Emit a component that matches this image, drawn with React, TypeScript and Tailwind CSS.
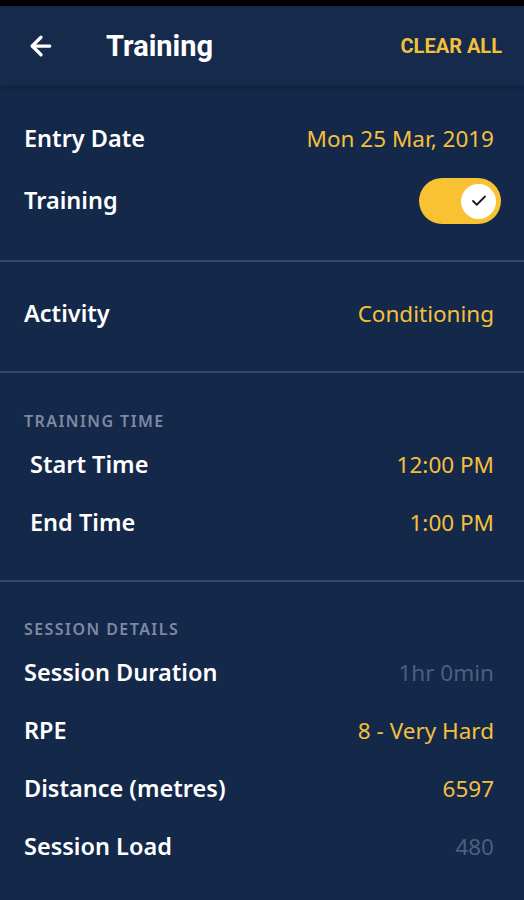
import { ArrowLeft, Check } from 'lucide-react';

type Row = { label: string; value: string; muted?: boolean };

const sans = "font-['Noto_Sans','Open_Sans',sans-serif]";

function Divider() {
  return <div className="h-[2px] bg-[#34496b]" />;
}

function FieldRow({ label, value, muted, indent }: Row & { indent?: boolean }) {
  return (
    <div className={`flex h-[58px] items-center justify-between pr-[30px] ${indent ? 'pl-[30px]' : 'pl-[24px]'}`}>
      <span className="text-[23.5px] font-semibold text-white">{label}</span>
      <span className={`text-[22.5px] ${muted ? 'text-[#4c5f80]' : 'text-[#f4c03c]'}`}>{value}</span>
    </div>
  );
}

function SectionLabel({ children }: { children: string }) {
  return (
    <div className="flex h-[20px] items-center pl-[24px] text-[16px] font-semibold uppercase tracking-[0.09em] text-[#7e8aa0]">
      {children}
    </div>
  );
}

export default function App() {
  const timeRows: Row[] = [
    { label: 'Start Time', value: '12:00 PM' },
    { label: 'End Time', value: '1:00 PM' },
  ];
  const sessionRows: Row[] = [
    { label: 'Session Duration', value: '1hr 0min', muted: true },
    { label: 'RPE', value: '8 - Very Hard' },
    { label: 'Distance (metres)', value: '6597' },
    { label: 'Session Load', value: '480', muted: true },
  ];

  return (
    <div className={`flex min-h-[900px] w-[524px] flex-col bg-[#14284a] ${sans}`}>
      <div className="h-[6px] bg-black" />
      <header className="flex h-[80px] items-center bg-[#162a4b] pl-[26px] pr-[22px] shadow-[0_2px_3px_rgba(0,0,0,0.2)]">
        <ArrowLeft className="h-[30px] w-[30px] text-white" strokeWidth={2.6} />
        <h1 className="ml-[50px] flex-1 pt-[2px] font-['Roboto',sans-serif] text-[29px] font-bold text-white">Training</h1>
        <button className="font-['Roboto',sans-serif] text-[20px] font-bold text-[#f4c03c]">CLEAR ALL</button>
      </header>

      <section className="pb-[30px] pt-[24px]">
        <FieldRow label="Entry Date" value="Mon 25 Mar, 2019" />
        <div className="flex h-[62px] items-center justify-between pl-[24px] pr-[23px] pt-[4px]">
          <span className="text-[23.5px] font-semibold text-white">Training</span>
          <div className="flex h-[46px] w-[82px] items-center justify-end rounded-full bg-[#f8c232] pr-[5px]">
            <div className="flex h-[35px] w-[35px] items-center justify-center rounded-full bg-white">
              <Check className="h-[18px] w-[18px] text-[#1b1b1b]" strokeWidth={2.4} />
            </div>
          </div>
        </div>
      </section>
      <Divider />

      <section className="pb-[28px] pt-[23px]">
        <FieldRow label="Activity" value="Conditioning" />
      </section>
      <Divider />

      <section className="pb-[28px] pt-[38px]">
        <SectionLabel>Training Time</SectionLabel>
        <div className="mt-[5px]">
          {timeRows.map((r) => (
            <FieldRow key={r.label} {...r} indent />
          ))}
        </div>
      </section>
      <Divider />

      <section className="pt-[37px]">
        <SectionLabel>Session Details</SectionLabel>
        <div className="mt-[5px]">
          {sessionRows.map((r) => (
            <FieldRow key={r.label} {...r} />
          ))}
        </div>
      </section>
    </div>
  );
}
